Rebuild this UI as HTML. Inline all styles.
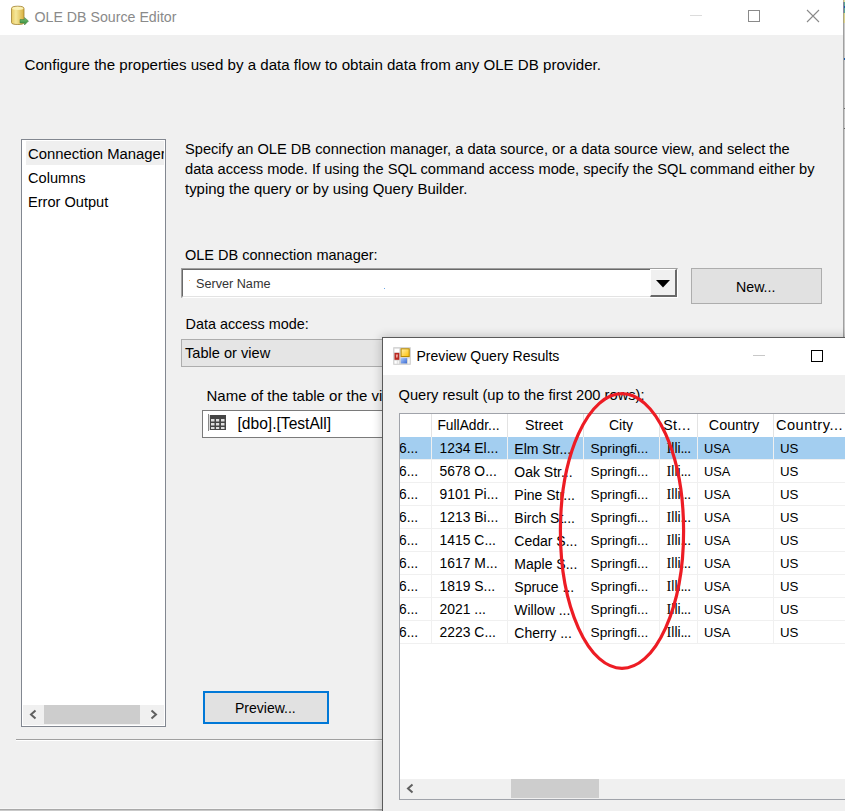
<!DOCTYPE html>
<html><head><meta charset="utf-8">
<style>
*{box-sizing:border-box}
html,body{margin:0;padding:0}
body{width:845px;height:811px;overflow:hidden;position:relative;background:#f0f0f0;font-family:"Liberation Sans",sans-serif;color:#000}
.a{position:absolute}
.t{position:absolute;white-space:nowrap;line-height:1;font-size:14.6px}
.gh{font-size:13.4px;text-align:center;overflow:hidden}
.gc{font-size:13.3px}
</style></head><body>

<!-- main dialog title bar -->
<div class="a" style="left:0;top:0;width:843px;height:35px;background:#fff"></div>
<svg class="a" style="left:10px;top:5px" width="22" height="22" viewBox="0 0 22 22">
  <defs>
    <linearGradient id="cy" x1="0" x2="1" y1="0" y2="0">
      <stop offset="0" stop-color="#e8c860"/><stop offset="0.35" stop-color="#f5e79a"/><stop offset="1" stop-color="#d9b040"/>
    </linearGradient>
    <linearGradient id="ar" x1="0" x2="0" y1="0" y2="1">
      <stop offset="0" stop-color="#7cc07a"/><stop offset="1" stop-color="#2f8a35"/>
    </linearGradient>
  </defs>
  <path d="M1.5 3.5 Q1.5 1.2 7.8 1.2 Q14 1.2 14 3.5 L14 17.5 Q14 19.5 7.8 19.5 Q1.5 19.5 1.5 17.5 Z" fill="url(#cy)" stroke="#a08030" stroke-width="0.8"/>
  <ellipse cx="7.8" cy="3.3" rx="5.6" ry="1.6" fill="#fbf2b8"/>
  <path d="M10 14.5 L14.5 14.5 L14.5 12.5 L18.5 16 L14.5 20 L14.5 18 L10 18 Z" fill="url(#ar)" stroke="#3a7a3a" stroke-width="0.5"/>
</svg>
<div class="t" style="left:34.5px;top:9.8px;font-size:14.2px;color:#8a8a8a">OLE DB Source Editor</div>
<div class="a" style="left:690px;top:15px;width:12px;height:1px;background:#dcdcdc"></div>
<div class="a" style="left:748px;top:10px;width:12px;height:12px;border:1px solid #8a8a8a"></div>
<svg class="a" style="left:806px;top:9px" width="14" height="14" viewBox="0 0 14 14"><path d="M1 1 L13 13 M13 1 L1 13" stroke="#8a8a8a" stroke-width="1.1"/></svg>

<!-- right edge -->
<div class="a" style="left:843px;top:0;width:1px;height:811px;background:#a0a0a0"></div>
<div class="a" style="left:844px;top:0;width:1px;height:811px;background:#cacaca"></div>
<div class="a" style="left:843px;top:0;width:1px;height:2px;background:#c0b890"></div>
<div class="a" style="left:844px;top:0;width:1px;height:2px;background:#e6dea0"></div>
<div class="a" style="left:843px;top:2px;width:1px;height:11px;background:#8a84a0"></div>
<div class="a" style="left:844px;top:2px;width:1px;height:11px;background:#58a894"></div>
<div class="a" style="left:844px;top:6px;width:1px;height:2px;background:#1a5aa8"></div>
<div class="a" style="left:843px;top:13px;width:1px;height:10px;background:#aca680"></div>
<div class="a" style="left:844px;top:13px;width:1px;height:10px;background:#dcd490"></div>
<div class="a" style="left:844px;top:58px;width:1px;height:2px;background:#1a5aa8"></div>
<div class="a" style="left:844px;top:108px;width:1px;height:1px;background:#666"></div>
<div class="a" style="left:844px;top:128px;width:1px;height:1px;background:#666"></div>

<!-- bottom edge -->
<div class="a" style="left:0;top:808px;width:843px;height:1px;background:#f6f6f6"></div>
<div class="a" style="left:0;top:809px;width:843px;height:1px;background:#a9a9a9"></div>
<div class="a" style="left:0;top:810px;width:843px;height:1px;background:#c9c9c9"></div>

<div class="t" style="left:24.5px;top:57.2px;font-size:15.1px">Configure the properties used by a data flow to obtain data from any OLE DB provider.</div>

<!-- list box -->
<div class="a" style="left:21px;top:139px;width:145px;height:588px;border:1px solid #828790;background:#fff"></div>
<div class="a" style="left:26px;top:141px;width:138px;height:24px;background:#efefef"></div>
<div class="a" style="left:26px;top:141px;width:138px;height:80px;overflow:hidden">
  <div class="t" style="left:2px;top:5.5px;font-size:14.85px">Connection Manager</div>
  <div class="t" style="left:2px;top:29.6px;font-size:14.6px">Columns</div>
  <div class="t" style="left:2px;top:53.6px;font-size:14.6px">Error Output</div>
</div>
<div class="a" style="left:23px;top:705px;width:141px;height:20px;background:#f0f0f0"></div>
<div class="a" style="left:44px;top:705px;width:96px;height:19px;background:#cdcdcd"></div>
<svg class="a" style="left:23px;top:705px" width="141" height="20" viewBox="0 0 141 20">
  <path d="M12.5 5.5 L8 9.5 L12.5 13.5" fill="none" stroke="#606060" stroke-width="2"/>
  <path d="M128.5 5.5 L133 9.5 L128.5 13.5" fill="none" stroke="#606060" stroke-width="2"/>
</svg>

<!-- description -->
<div class="t" style="left:185px;top:142.4px;font-size:14.65px">Specify an OLE DB connection manager, a data source, or a data source view, and select the</div>
<div class="t" style="left:185px;top:162.4px;font-size:14.65px">data access mode. If using the SQL command access mode, specify the SQL command either by</div>
<div class="t" style="left:185px;top:182.1px;font-size:14.95px">typing the query or by using Query Builder.</div>

<div class="t" style="left:185px;top:247.6px;font-size:14.5px">OLE DB connection manager:</div>

<!-- combo server -->
<div class="a" style="left:181px;top:268px;width:497px;height:30px;background:#fff;border-top:2px solid #a0a0a0;border-left:2px solid #a0a0a0;border-right:1px solid #fff;border-bottom:1px solid #fff"></div>
<div class="a" style="left:182px;top:269px;width:495px;height:28px;border-top:1px solid #696969;border-left:1px solid #696969;border-right:1px solid #e3e3e3;border-bottom:1px solid #e3e3e3"></div>
<div class="t" style="left:196px;top:277.9px;font-size:12.65px;color:#333">Server Name</div>
<div class="a" style="left:189px;top:280px;width:1px;height:1px;background:#ffc27a"></div>
<div class="a" style="left:384px;top:288px;width:1px;height:1px;background:#6aa8e8"></div>
<div class="a" style="left:650px;top:269px;width:27px;height:28px;background:#f0f0f0;border-top:1px solid #fff;border-left:1px solid #fff;border-right:2px solid #696969;border-bottom:2px solid #696969"></div>
<svg class="a" style="left:655px;top:279px" width="16" height="10" viewBox="0 0 16 10"><path d="M1 1 L15 1 L8 8.5 Z" fill="#000"/></svg>

<!-- New button -->
<div class="a" style="left:691px;top:268px;width:131px;height:36px;background:#e1e1e1;border:1px solid #adadad"></div>
<div class="t" style="left:736px;top:279.9px;font-size:14.2px">New...</div>

<div class="t" style="left:185.5px;top:316.6px;font-size:14.4px">Data access mode:</div>

<!-- table or view combo -->
<div class="a" style="left:181px;top:339px;width:500px;height:28px;background:#e5e5e5;border:1px solid #adadad"></div>
<div class="t" style="left:185px;top:346.3px;font-size:14.6px">Table or view</div>

<div class="t" style="left:206.5px;top:388.3px;font-size:15px;width:176px;overflow:hidden">Name of the table or the view:</div>

<!-- table textbox -->
<div class="a" style="left:202px;top:410px;width:300px;height:28px;background:#fff;border:1px solid #7a7a7a"></div>
<svg class="a" style="left:208px;top:414px" width="19" height="17" viewBox="0 0 19 17">
  <rect x="0" y="0" width="1" height="17" fill="#8a8a8a"/>
  <rect x="1.8" y="1" width="16.2" height="15" fill="#454545"/>
  <g fill="#dedede">
    <rect x="3" y="5" width="3.5" height="2.5"/><rect x="8" y="5" width="3.2" height="2.5"/><rect x="13" y="5" width="3.5" height="2.5"/>
    <rect x="3" y="9" width="3.5" height="2.5"/><rect x="8" y="9" width="3.2" height="2.5"/><rect x="13" y="9" width="3.5" height="2.5"/>
    <rect x="3" y="13" width="3.5" height="2"/><rect x="8" y="13" width="3.2" height="2"/><rect x="13" y="13" width="3.5" height="2"/>
  </g>
</svg>
<div class="t" style="left:237.5px;top:416.1px;font-size:15.6px">[dbo].[TestAll]</div>

<!-- Preview button -->
<div class="a" style="left:203px;top:691px;width:126px;height:33px;background:#e1e1e1;border:2px solid #0078d7"></div>
<div class="t" style="left:235px;top:701.4px;font-size:14px">Preview...</div>

<!-- separator -->
<div class="a" style="left:16px;top:739px;width:827px;height:1px;background:#a0a0a0"></div>
<div class="a" style="left:16px;top:740px;width:827px;height:1px;background:#fff"></div>

<!-- ============ Preview window ============ -->
<div class="a" style="left:382px;top:337px;width:470px;height:480px;background:#f0f0f0;border:1px solid #5a5a5a;box-shadow:0 0 9px 1px rgba(0,0,0,0.2)"></div>
<div class="a" style="left:383px;top:338px;width:462px;height:37px;background:#fff"></div>
<svg class="a" style="left:393px;top:347px" width="18" height="18" viewBox="0 0 18 18">
  <defs>
    <linearGradient id="yl" x1="0" x2="1" y1="0" y2="1"><stop offset="0" stop-color="#fff0b0"/><stop offset="1" stop-color="#ffc000"/></linearGradient>
    <linearGradient id="bl" x1="0" x2="1" y1="0" y2="1"><stop offset="0" stop-color="#a8c8ff"/><stop offset="1" stop-color="#3a6ad0"/></linearGradient>
  </defs>
  <rect x="0" y="0" width="18" height="18" rx="1" fill="#d6d6d6"/>
  <rect x="1.5" y="1.7" width="4.8" height="3.6" fill="#fff"/>
  <rect x="1.5" y="5.9" width="4.8" height="6.9" fill="#b82820"/>
  <path d="M2.8 7.6 L5 7.6 L4.6 10.2 L3.9 11 L3.2 10.2 Z" fill="#f0a8a0"/>
  <rect x="1.5" y="13.6" width="2.3" height="3.1" fill="#fff"/>
  <rect x="4.5" y="13.6" width="1.5" height="3.1" fill="#f4f4f4"/>
  <rect x="8.1" y="1.8" width="8.1" height="7.7" fill="url(#yl)" stroke="#b88a00" stroke-width="1"/>
  <rect x="7.8" y="11.1" width="6.2" height="5.3" fill="url(#bl)"/>
  <rect x="15" y="11.5" width="1.7" height="5" fill="#f4f4f4"/>
</svg>
<div class="t" style="left:416.5px;top:349.1px;font-size:14.06px">Preview Query Results</div>
<div class="a" style="left:753px;top:355px;width:12px;height:1px;background:#c8c8c8"></div>
<div class="a" style="left:811px;top:350px;width:12px;height:12px;border:1px solid #000"></div>

<div class="t" style="left:398.5px;top:387.6px;font-size:14.66px">Query result (up to the first 200 rows):</div>

<!-- grid -->
<div class="a" style="left:399px;top:413px;width:460px;height:387px;background:#fff;border:1px solid #a0a3aa"></div>
<div id="grid" class="a" style="left:400px;top:414px;width:445px;height:365px;overflow:hidden">
<div class="a" style="left:31px;top:0;width:1px;height:23px;background:#e3e3e3"></div>
<div class="a" style="left:107px;top:0;width:1px;height:23px;background:#e3e3e3"></div>
<div class="a" style="left:183px;top:0;width:1px;height:23px;background:#e3e3e3"></div>
<div class="a" style="left:259px;top:0;width:1px;height:23px;background:#e3e3e3"></div>
<div class="a" style="left:297px;top:0;width:1px;height:23px;background:#e3e3e3"></div>
<div class="a" style="left:373px;top:0;width:1px;height:23px;background:#e3e3e3"></div>
<div class="t gh" style="left:31px;width:75px;top:4.62px;font-size:13.8px;letter-spacing:0px">FullAddr...</div>
<div class="t gh" style="left:106.5px;width:75px;top:4.28px;font-size:14.2px;letter-spacing:0px">Street</div>
<div class="t gh" style="left:183.5px;width:75px;top:4.45px;font-size:14.0px;letter-spacing:0px">City</div>
<div class="t gh" style="left:258.5px;width:37px;top:4.28px;font-size:14.2px;letter-spacing:0.5px">St...</div>
<div class="t gh" style="left:296.5px;width:75px;top:4.11px;font-size:14.4px;letter-spacing:0px">Country</div>
<div class="t gh" style="left:372px;width:75px;top:3.94px;font-size:14.6px;letter-spacing:0.5px">Country...</div>
<div class="a" style="left:0;top:23px;width:445px;height:22px;background:#a3cef0"></div>
<div class="a" style="left:0;top:45px;width:445px;height:1px;background:#f0f0f0"></div>
<div class="a" style="left:31px;top:23px;width:1px;height:22px;background:#f0f0f0"></div>
<div class="a" style="left:107px;top:23px;width:1px;height:22px;background:#f0f0f0"></div>
<div class="a" style="left:183px;top:23px;width:1px;height:22px;background:#f0f0f0"></div>
<div class="a" style="left:259px;top:23px;width:1px;height:22px;background:#f0f0f0"></div>
<div class="a" style="left:297px;top:23px;width:1px;height:22px;background:#f0f0f0"></div>
<div class="a" style="left:373px;top:23px;width:1px;height:22px;background:#f0f0f0"></div>
<div class="t" style="left:-1.0px;top:27.92px;font-size:13.8px">6...</div>
<div class="t" style="left:39.6px;top:27.83px;font-size:13.9px">1234 El...</div>
<div class="t" style="left:114.3px;top:27.75px;font-size:14.0px">Elm Str...</div>
<div class="t" style="left:190.6px;top:28.00px;font-size:13.7px">Springfi...</div>
<div class="t" style="left:266.5px;top:27.83px;font-size:13.9px"><span style="font-family:'Liberation Serif';font-size:14.5px;line-height:0">I</span>lli<span style="letter-spacing:-0.6px">...</span></div>
<div class="t" style="left:304.0px;top:28.76px;font-size:12.8px">USA</div>
<div class="t" style="left:380.0px;top:28.34px;font-size:13.3px">US</div>
<div class="a" style="left:0;top:68px;width:445px;height:1px;background:#f0f0f0"></div>
<div class="a" style="left:31px;top:46px;width:1px;height:22px;background:#f0f0f0"></div>
<div class="a" style="left:107px;top:46px;width:1px;height:22px;background:#f0f0f0"></div>
<div class="a" style="left:183px;top:46px;width:1px;height:22px;background:#f0f0f0"></div>
<div class="a" style="left:259px;top:46px;width:1px;height:22px;background:#f0f0f0"></div>
<div class="a" style="left:297px;top:46px;width:1px;height:22px;background:#f0f0f0"></div>
<div class="a" style="left:373px;top:46px;width:1px;height:22px;background:#f0f0f0"></div>
<div class="t" style="left:-1.0px;top:50.92px;font-size:13.8px">6...</div>
<div class="t" style="left:39.6px;top:50.83px;font-size:13.9px">5678 O...</div>
<div class="t" style="left:114.3px;top:50.75px;font-size:14.0px">Oak Str...</div>
<div class="t" style="left:190.6px;top:51.00px;font-size:13.7px">Springfi...</div>
<div class="t" style="left:266.5px;top:50.83px;font-size:13.9px"><span style="font-family:'Liberation Serif';font-size:14.5px;line-height:0">I</span>lli<span style="letter-spacing:-0.6px">...</span></div>
<div class="t" style="left:304.0px;top:51.76px;font-size:12.8px">USA</div>
<div class="t" style="left:380.0px;top:51.34px;font-size:13.3px">US</div>
<div class="a" style="left:0;top:91px;width:445px;height:1px;background:#f0f0f0"></div>
<div class="a" style="left:31px;top:69px;width:1px;height:22px;background:#f0f0f0"></div>
<div class="a" style="left:107px;top:69px;width:1px;height:22px;background:#f0f0f0"></div>
<div class="a" style="left:183px;top:69px;width:1px;height:22px;background:#f0f0f0"></div>
<div class="a" style="left:259px;top:69px;width:1px;height:22px;background:#f0f0f0"></div>
<div class="a" style="left:297px;top:69px;width:1px;height:22px;background:#f0f0f0"></div>
<div class="a" style="left:373px;top:69px;width:1px;height:22px;background:#f0f0f0"></div>
<div class="t" style="left:-1.0px;top:73.92px;font-size:13.8px">6...</div>
<div class="t" style="left:39.6px;top:73.83px;font-size:13.9px">9101 Pi...</div>
<div class="t" style="left:114.3px;top:73.75px;font-size:14.0px">Pine Str...</div>
<div class="t" style="left:190.6px;top:74.00px;font-size:13.7px">Springfi...</div>
<div class="t" style="left:266.5px;top:73.83px;font-size:13.9px"><span style="font-family:'Liberation Serif';font-size:14.5px;line-height:0">I</span>lli<span style="letter-spacing:-0.6px">...</span></div>
<div class="t" style="left:304.0px;top:74.76px;font-size:12.8px">USA</div>
<div class="t" style="left:380.0px;top:74.34px;font-size:13.3px">US</div>
<div class="a" style="left:0;top:114px;width:445px;height:1px;background:#f0f0f0"></div>
<div class="a" style="left:31px;top:92px;width:1px;height:22px;background:#f0f0f0"></div>
<div class="a" style="left:107px;top:92px;width:1px;height:22px;background:#f0f0f0"></div>
<div class="a" style="left:183px;top:92px;width:1px;height:22px;background:#f0f0f0"></div>
<div class="a" style="left:259px;top:92px;width:1px;height:22px;background:#f0f0f0"></div>
<div class="a" style="left:297px;top:92px;width:1px;height:22px;background:#f0f0f0"></div>
<div class="a" style="left:373px;top:92px;width:1px;height:22px;background:#f0f0f0"></div>
<div class="t" style="left:-1.0px;top:96.92px;font-size:13.8px">6...</div>
<div class="t" style="left:39.6px;top:96.83px;font-size:13.9px">1213 Bi...</div>
<div class="t" style="left:114.3px;top:96.75px;font-size:14.0px">Birch St...</div>
<div class="t" style="left:190.6px;top:97.00px;font-size:13.7px">Springfi...</div>
<div class="t" style="left:266.5px;top:96.83px;font-size:13.9px"><span style="font-family:'Liberation Serif';font-size:14.5px;line-height:0">I</span>lli<span style="letter-spacing:-0.6px">...</span></div>
<div class="t" style="left:304.0px;top:97.76px;font-size:12.8px">USA</div>
<div class="t" style="left:380.0px;top:97.34px;font-size:13.3px">US</div>
<div class="a" style="left:0;top:137px;width:445px;height:1px;background:#f0f0f0"></div>
<div class="a" style="left:31px;top:115px;width:1px;height:22px;background:#f0f0f0"></div>
<div class="a" style="left:107px;top:115px;width:1px;height:22px;background:#f0f0f0"></div>
<div class="a" style="left:183px;top:115px;width:1px;height:22px;background:#f0f0f0"></div>
<div class="a" style="left:259px;top:115px;width:1px;height:22px;background:#f0f0f0"></div>
<div class="a" style="left:297px;top:115px;width:1px;height:22px;background:#f0f0f0"></div>
<div class="a" style="left:373px;top:115px;width:1px;height:22px;background:#f0f0f0"></div>
<div class="t" style="left:-1.0px;top:119.92px;font-size:13.8px">6...</div>
<div class="t" style="left:39.6px;top:119.83px;font-size:13.9px">1415 C...</div>
<div class="t" style="left:114.3px;top:119.75px;font-size:14.0px">Cedar S...</div>
<div class="t" style="left:190.6px;top:120.00px;font-size:13.7px">Springfi...</div>
<div class="t" style="left:266.5px;top:119.83px;font-size:13.9px"><span style="font-family:'Liberation Serif';font-size:14.5px;line-height:0">I</span>lli<span style="letter-spacing:-0.6px">...</span></div>
<div class="t" style="left:304.0px;top:120.76px;font-size:12.8px">USA</div>
<div class="t" style="left:380.0px;top:120.34px;font-size:13.3px">US</div>
<div class="a" style="left:0;top:160px;width:445px;height:1px;background:#f0f0f0"></div>
<div class="a" style="left:31px;top:138px;width:1px;height:22px;background:#f0f0f0"></div>
<div class="a" style="left:107px;top:138px;width:1px;height:22px;background:#f0f0f0"></div>
<div class="a" style="left:183px;top:138px;width:1px;height:22px;background:#f0f0f0"></div>
<div class="a" style="left:259px;top:138px;width:1px;height:22px;background:#f0f0f0"></div>
<div class="a" style="left:297px;top:138px;width:1px;height:22px;background:#f0f0f0"></div>
<div class="a" style="left:373px;top:138px;width:1px;height:22px;background:#f0f0f0"></div>
<div class="t" style="left:-1.0px;top:142.92px;font-size:13.8px">6...</div>
<div class="t" style="left:39.6px;top:142.83px;font-size:13.9px">1617 M...</div>
<div class="t" style="left:114.3px;top:142.75px;font-size:14.0px">Maple S...</div>
<div class="t" style="left:190.6px;top:143.00px;font-size:13.7px">Springfi...</div>
<div class="t" style="left:266.5px;top:142.83px;font-size:13.9px"><span style="font-family:'Liberation Serif';font-size:14.5px;line-height:0">I</span>lli<span style="letter-spacing:-0.6px">...</span></div>
<div class="t" style="left:304.0px;top:143.76px;font-size:12.8px">USA</div>
<div class="t" style="left:380.0px;top:143.34px;font-size:13.3px">US</div>
<div class="a" style="left:0;top:183px;width:445px;height:1px;background:#f0f0f0"></div>
<div class="a" style="left:31px;top:161px;width:1px;height:22px;background:#f0f0f0"></div>
<div class="a" style="left:107px;top:161px;width:1px;height:22px;background:#f0f0f0"></div>
<div class="a" style="left:183px;top:161px;width:1px;height:22px;background:#f0f0f0"></div>
<div class="a" style="left:259px;top:161px;width:1px;height:22px;background:#f0f0f0"></div>
<div class="a" style="left:297px;top:161px;width:1px;height:22px;background:#f0f0f0"></div>
<div class="a" style="left:373px;top:161px;width:1px;height:22px;background:#f0f0f0"></div>
<div class="t" style="left:-1.0px;top:165.92px;font-size:13.8px">6...</div>
<div class="t" style="left:39.6px;top:165.83px;font-size:13.9px">1819 S...</div>
<div class="t" style="left:114.3px;top:165.75px;font-size:14.0px">Spruce ...</div>
<div class="t" style="left:190.6px;top:166.00px;font-size:13.7px">Springfi...</div>
<div class="t" style="left:266.5px;top:165.83px;font-size:13.9px"><span style="font-family:'Liberation Serif';font-size:14.5px;line-height:0">I</span>lli<span style="letter-spacing:-0.6px">...</span></div>
<div class="t" style="left:304.0px;top:166.76px;font-size:12.8px">USA</div>
<div class="t" style="left:380.0px;top:166.34px;font-size:13.3px">US</div>
<div class="a" style="left:0;top:206px;width:445px;height:1px;background:#f0f0f0"></div>
<div class="a" style="left:31px;top:184px;width:1px;height:22px;background:#f0f0f0"></div>
<div class="a" style="left:107px;top:184px;width:1px;height:22px;background:#f0f0f0"></div>
<div class="a" style="left:183px;top:184px;width:1px;height:22px;background:#f0f0f0"></div>
<div class="a" style="left:259px;top:184px;width:1px;height:22px;background:#f0f0f0"></div>
<div class="a" style="left:297px;top:184px;width:1px;height:22px;background:#f0f0f0"></div>
<div class="a" style="left:373px;top:184px;width:1px;height:22px;background:#f0f0f0"></div>
<div class="t" style="left:-1.0px;top:188.92px;font-size:13.8px">6...</div>
<div class="t" style="left:39.6px;top:188.83px;font-size:13.9px">2021 ...</div>
<div class="t" style="left:114.3px;top:188.75px;font-size:14.0px">Willow ...</div>
<div class="t" style="left:190.6px;top:189.00px;font-size:13.7px">Springfi...</div>
<div class="t" style="left:266.5px;top:188.83px;font-size:13.9px"><span style="font-family:'Liberation Serif';font-size:14.5px;line-height:0">I</span>lli<span style="letter-spacing:-0.6px">...</span></div>
<div class="t" style="left:304.0px;top:189.76px;font-size:12.8px">USA</div>
<div class="t" style="left:380.0px;top:189.34px;font-size:13.3px">US</div>
<div class="a" style="left:0;top:229px;width:445px;height:1px;background:#f0f0f0"></div>
<div class="a" style="left:31px;top:207px;width:1px;height:22px;background:#f0f0f0"></div>
<div class="a" style="left:107px;top:207px;width:1px;height:22px;background:#f0f0f0"></div>
<div class="a" style="left:183px;top:207px;width:1px;height:22px;background:#f0f0f0"></div>
<div class="a" style="left:259px;top:207px;width:1px;height:22px;background:#f0f0f0"></div>
<div class="a" style="left:297px;top:207px;width:1px;height:22px;background:#f0f0f0"></div>
<div class="a" style="left:373px;top:207px;width:1px;height:22px;background:#f0f0f0"></div>
<div class="t" style="left:-1.0px;top:211.92px;font-size:13.8px">6...</div>
<div class="t" style="left:39.6px;top:211.83px;font-size:13.9px">2223 C...</div>
<div class="t" style="left:114.3px;top:211.75px;font-size:14.0px">Cherry ...</div>
<div class="t" style="left:190.6px;top:212.00px;font-size:13.7px">Springfi...</div>
<div class="t" style="left:266.5px;top:211.83px;font-size:13.9px"><span style="font-family:'Liberation Serif';font-size:14.5px;line-height:0">I</span>lli<span style="letter-spacing:-0.6px">...</span></div>
<div class="t" style="left:304.0px;top:212.76px;font-size:12.8px">USA</div>
<div class="t" style="left:380.0px;top:212.34px;font-size:13.3px">US</div>
</div>
<!-- h scrollbar -->
<div class="a" style="left:400px;top:779px;width:445px;height:20px;background:#f0f0f0"></div>
<div class="a" style="left:511px;top:779px;width:88px;height:19px;background:#cdcdcd"></div>
<svg class="a" style="left:400px;top:779px" width="20" height="20" viewBox="0 0 20 20"><path d="M12.5 5.5 L8 9.5 L12.5 13.5" fill="none" stroke="#606060" stroke-width="2"/></svg>

<!-- red ellipse -->
<svg class="a" style="left:0;top:0" width="845" height="811" viewBox="0 0 845 811">
  <ellipse cx="622" cy="531" rx="61.6" ry="137.3" fill="none" stroke="#ed1c24" stroke-width="3.2"/>
</svg>

</body></html>
